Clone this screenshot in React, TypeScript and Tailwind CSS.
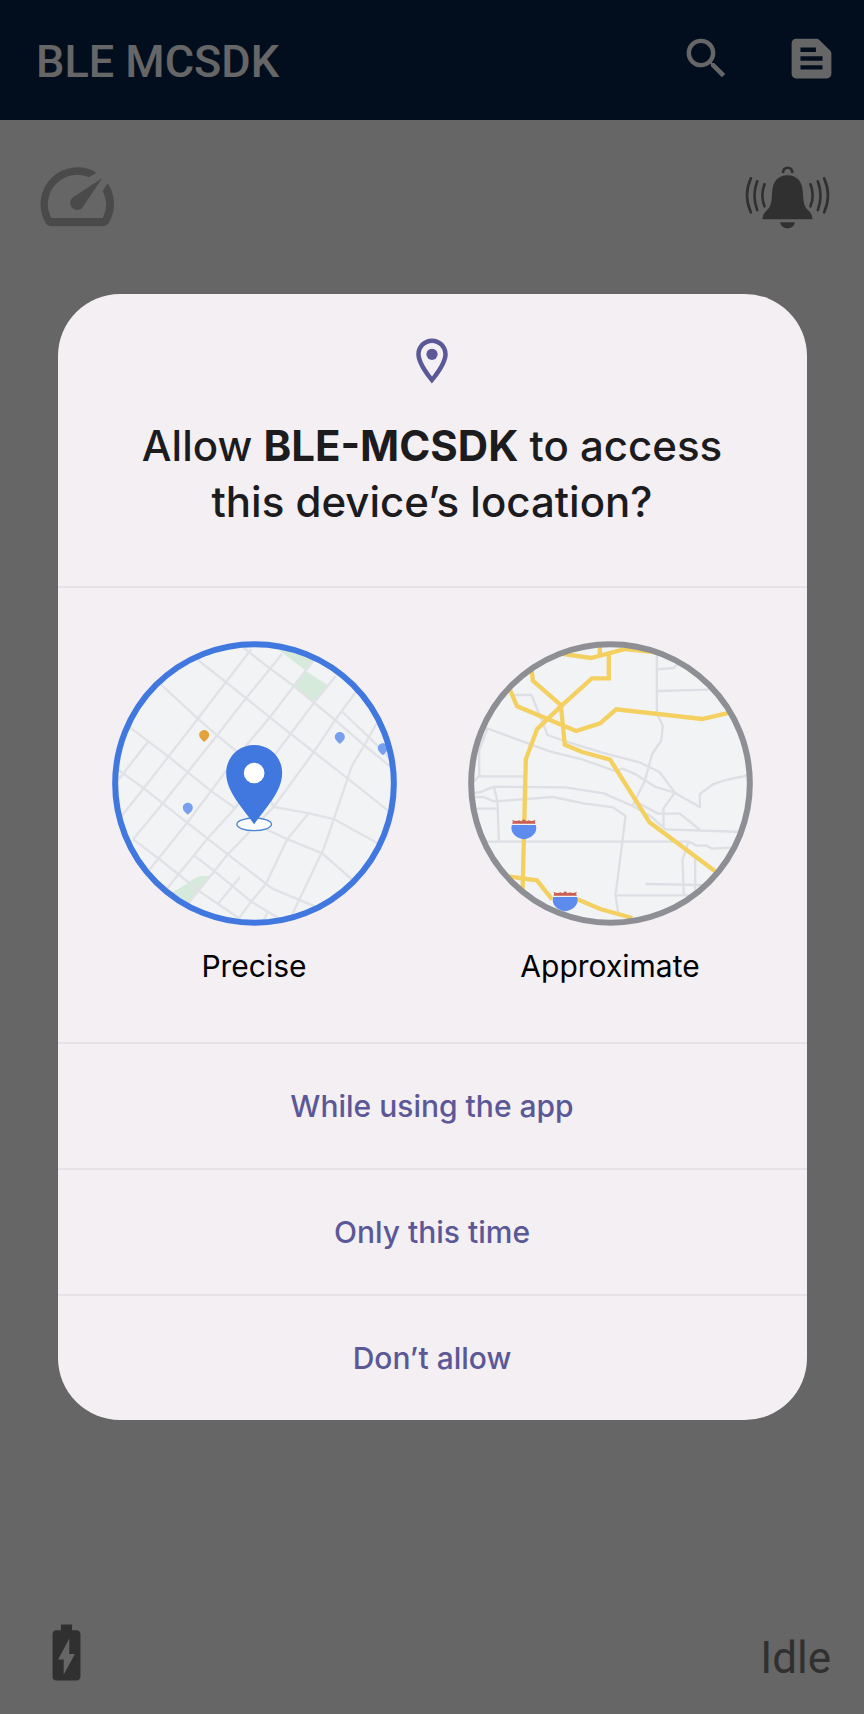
import { useState, type ReactNode } from 'react';
import { MdBatteryChargingFull, MdOutlineLocationOn, MdSearch } from 'react-icons/md';

type Accuracy = 'precise' | 'approximate';

function NotesIcon() {
  return (
    <svg viewBox="0 0 24 24" fill="currentColor" className="size-[53px]" aria-hidden="true">
      <path d="M20.41 8.41l-4.83-4.83C15.21 3.21 14.7 3 14.17 3H5c-1.1 0-2 .9-2 2v14c0 1.1.9 2 2 2h14c1.1 0 2-.9 2-2V9.83c0-.53-.21-1.04-.59-1.42zM7 7h7v2H7V7zm10 10H7v-2h10v2zm0-4H7v-2h10v2z" />
    </svg>
  );
}

function GaugeIcon() {
  return (
    <svg viewBox="120 500 222 183" fill="currentColor" className="h-[61px] w-[74px] text-[#b9b9b9]" role="img" aria-label="Motor speed">
      <path d="M290 520A111 111 0 0 0 135 668Q141 681 154 681H308Q321 681 328 668A111 111 0 0 0 323 552L308 575A88 88 0 0 1 308 656H154A88 88 0 0 1 267 534Z" />
      <path d="M307 536L247 625A21 21 0 1 1 216 596Z" />
    </svg>
  );
}

function BellIcon() {
  return (
    <svg viewBox="315 497 254 189" fill="currentColor" className="h-[63px] w-[85px] text-[#787878]" role="img" aria-label="Alerts">
      <path d="M442 525C412 525 398 545 396 575C394 605 393 618 380 630C371 638 368 645 367 657H517C516 645 513 638 504 630C491 618 490 605 488 575C486 545 472 525 442 525Z" />
      <path d="M420 666H464C461 690 423 690 420 666Z" />
      <g fill="none" stroke="currentColor" strokeWidth="8">
        <path d="M428 518C430 497 455 497 457 518" />
        <g strokeLinecap="round">
          <path d="M332 534Q309 585 332 636M351 543Q335 586 351 629M373 552Q360 585 373 618" />
          <path d="M552 534Q575 585 552 636M533 543Q549 586 533 629M511 552Q524 585 511 618" />
        </g>
      </g>
    </svg>
  );
}

function Drop({ x, y, color }: { x: number; y: number; color: string }) {
  return (
    <path
      transform={`translate(${x} ${y})`}
      fill={color}
      d="M0 -17C-9 -17 -15 -10 -15 -2C-15 7 -8 11 0 19C8 11 15 7 15 -2C15 -10 9 -17 0 -17Z"
    />
  );
}

function PreciseMap({ ring }: { ring: string }) {
  return (
    <svg viewBox="34.5 33 855 855" className="w-full" aria-hidden="true">
      <clipPath id="precise-clip">
        <circle cx="462" cy="460.500" r="418" />
      </clipPath>
      <g clipPath="url(#precise-clip)">
        <rect x="30" y="30" width="870" height="870" fill="#f1f3f5" />
        <g fill="#d6eadb">
          <path d="M535 60L612 119L640 88L600 50Z" />
          <path d="M616 124L681 164L640 219L580 168Z" />
          <path d="M205 790C250 775 270 745 300 738H330L262 822Z" />
        </g>
        <g fill="none" stroke="#e1e2e6" strokeWidth="7">
          <path d="M452 58L292 266L130 475L60 562" />
          <path d="M545 72L437 204L350 316L186 521L98 628" />
          <path d="M640 90L508 262L412 376L260 578L146 720" />
          <path d="M706 138L640 219L572 309L404 534L318 629L196 780" />
          <path d="M766 186L704 270L640 366L520 530L382 673L262 822" />
          <path d="M292 90L376 156L508 262L640 366L742 446L870 548" />
          <path d="M430 54L508 115L580 168L704 270L790 345L880 418" />
          <path d="M183 165L292 266L350 316L420 374" />
          <path d="M88 292L204 380L334 485L404 534" />
          <path d="M54 420L130 475L260 578L382 673L516 776L650 832" />
          <path d="M142 336L56 446" />
          <path d="M98 628L176 687L300 786L420 868" />
          <path d="M280 676L340 722L452 815L540 868" />
          <path d="M418 742L350 824M404 880L452 815L496 762L560 628L626 548" />
          <path d="M490 872L500 848" />
          <path d="M510 512L520 531L626 550L700 567L836 642" />
          <path d="M480 590L562 628L665 670L756 750" />
          <path d="M828 280L792 345L754 408L700 567L670 655L574 856" />
          <path d="M726 246L806 322L850 366L880 400" />
        </g>
        <Drop x={311} y={317} color="#e4a23e" />
        <Drop x={718} y={323} color="#78a0ee" />
        <Drop x={847} y={357} color="#78a0ee" />
        <Drop x={262} y={535} color="#78a0ee" />
        <ellipse cx="461" cy="583" rx="52" ry="19" fill="#fff" stroke="#4b83d9" strokeWidth="4" />
        <path d="M461 345C414 345 377 382 377 429C377 485 428 535 461 583C494 535 545 485 545 429C545 382 508 345 461 345Z" fill="#4078df" />
        <circle cx="461" cy="429" r="31" fill="#fff" />
      </g>
      <circle cx="462" cy="460.500" r="418" fill="none" stroke={ring} strokeWidth="18" />
    </svg>
  );
}

function Shield({ x, y }: { x: number; y: number }) {
  return (
    <g transform={`translate(${x} ${y})`}>
      <path d="M-38 -16H38V-8H-38Z" fill="#f1f3f5" />
      <path d="M-35 -14L-33 -20L-35 -26Q-24 -19 -14 -24L-8 -21L0 -27L8 -21L14 -24Q24 -19 35 -26L33 -20L35 -14Z" fill="#cc5f52" />
      <path d="M-36 -10H36C43 15 22 29 0 33C-22 29 -43 15 -36 -10Z" fill="#5e8cee" />
    </g>
  );
}

function ApproximateMap({ ring }: { ring: string }) {
  return (
    <svg viewBox="37.5 33 855 855" className="w-full" aria-hidden="true">
      <clipPath id="approximate-clip">
        <circle cx="465" cy="460.500" r="418" />
      </clipPath>
      <g clipPath="url(#approximate-clip)">
        <rect x="30" y="30" width="870" height="870" fill="#f1f3f5" />
        <g fill="none" stroke="#dedfe4" strokeWidth="7" strokeLinejoin="round">
          <path d="M604 60V250L622 288L617 332L590 372L568 452L532 526" />
          <path d="M604 118L654 114L672 96M604 183L760 179" />
          <path d="M170 195H228L276 315L340 337L440 368L552 397L612 426L660 490L733 531V492L772 463L810 450L870 438L882 424" />
          <path d="M92 294L170 323L285 365L380 388L478 423L502 416L542 434L600 471L658 488L624 535V592" />
          <path d="M96 296L71 360V438L48 462M71 439H208" />
          <path d="M50 490L76 486L115 470L330 472L445 490L532 528L590 562L630 598L860 606" />
          <path d="M50 501H84L116 514L292 501L385 520L473 532L510 558L500 640L480 796L490 860" />
          <path d="M115 470L126 515L130 635M55 536H126" />
          <path d="M80 635H700L724 647H754L770 656L830 653" />
          <path d="M536 512L608 551H673L734 600" />
          <path d="M698 638L681 690L685 796M719 680V780M570 762L740 765M480 796H700" />
        </g>
        <g fill="none" stroke="#f3d060" strokeWidth="13" strokeLinejoin="miter">
          <path d="M310 70L406 84L510 57L610 68M433 48V76" />
          <path d="M460 70V145H409L316 229L245 297L211 388L206 590L201 790" />
          <path d="M228 115L232 152L316 225L328 344L380 366L464 389L582 577L785 728" />
          <path d="M160 172L185 229L362 303L434 280L482 238L740 267L826 247" />
          <path d="M150 738L244 751L290 808M362 806L434 837L530 864" />
        </g>
        <Shield x={205} y={595} />
        <Shield x={329} y={811} />
      </g>
      <circle cx="465" cy="460.500" r="418" fill="none" stroke={ring} strokeWidth="18" />
    </svg>
  );
}

function AccuracyOption({
  value,
  label,
  selected,
  onSelect,
  children,
}: {
  value: Accuracy;
  label: string;
  selected: boolean;
  onSelect: (value: Accuracy) => void;
  children: ReactNode;
}) {
  return (
    <label className="flex w-full max-w-[285px] cursor-pointer flex-col items-center gap-5">
      <input type="radio" name="accuracy" value={value} checked={selected} onChange={() => onSelect(value)} className="sr-only" />
      {children}
      <span className="text-[30px] leading-10 text-black">{label}</span>
    </label>
  );
}

const BLUE = '#4078df';
const GRAY = '#8e8f94';
const CHOICES = ['While using the app', 'Only this time', 'Don’t allow'];

export default function App() {
  const [accuracy, setAccuracy] = useState<Accuracy>('precise');

  return (
    <div className="relative flex min-h-screen flex-col bg-white font-['Roboto',sans-serif]">
      <header className="flex items-start justify-between bg-[#05234a] pt-8 pr-[26px] pb-7 pl-9 text-white">
        <h1 className="text-[45px] leading-[60px] font-medium">BLE MCSDK</h1>
        <div className="flex items-center gap-[52px]">
          <button type="button" aria-label="Search">
            <MdSearch className="size-[53px]" />
          </button>
          <button type="button" aria-label="Logs">
            <NotesIcon />
          </button>
        </div>
      </header>

      <main className="flex flex-1 items-start justify-between pt-[46px] pr-[34px] pl-10">
        <GaugeIcon />
        <BellIcon />
      </main>

      <footer className="flex items-end justify-between pr-[33px] pb-7 pl-[33px] text-[#787878]">
        <MdBatteryChargingFull className="size-[67px]" role="img" aria-label="Battery charging" />
        <span className="text-[44px] leading-14">Idle</span>
      </footer>

      <div className="absolute inset-0 flex items-center justify-center bg-black/60 px-14">
        <section
          role="dialog"
          aria-modal="true"
          aria-labelledby="permission-title"
          className="w-full max-w-[749px] overflow-hidden rounded-[62px] bg-[#f3eff3] font-['Inter',sans-serif]"
        >
          <div className="flex flex-col items-center px-16 pt-10 pb-14">
            <MdOutlineLocationOn className="size-[54px] text-[#5b5897]" aria-hidden="true" />
            <h2 id="permission-title" className="mt-[30px] text-center text-[42px] leading-14 font-medium text-[#1c1b1e]">
              Allow <strong className="font-bold">BLE-MCSDK</strong> to access
              <br />
              this device’s location?
            </h2>
          </div>

          <div
            role="radiogroup"
            aria-label="Location accuracy"
            className="flex justify-center gap-[71px] border-t-2 border-[#e5e3e7] px-[54px] pt-[53px] pb-14"
          >
            <AccuracyOption value="precise" label="Precise" selected={accuracy === 'precise'} onSelect={setAccuracy}>
              <PreciseMap ring={accuracy === 'precise' ? BLUE : GRAY} />
            </AccuracyOption>
            <AccuracyOption value="approximate" label="Approximate" selected={accuracy === 'approximate'} onSelect={setAccuracy}>
              <ApproximateMap ring={accuracy === 'approximate' ? BLUE : GRAY} />
            </AccuracyOption>
          </div>

          <div className="flex flex-col">
            {CHOICES.map((choice) => (
              <button
                key={choice}
                type="button"
                className="w-full border-t-2 border-[#e5e3e7] py-[42px] text-[30px] leading-10 font-medium text-[#5b5897]"
              >
                {choice}
              </button>
            ))}
          </div>
        </section>
      </div>
    </div>
  );
}
